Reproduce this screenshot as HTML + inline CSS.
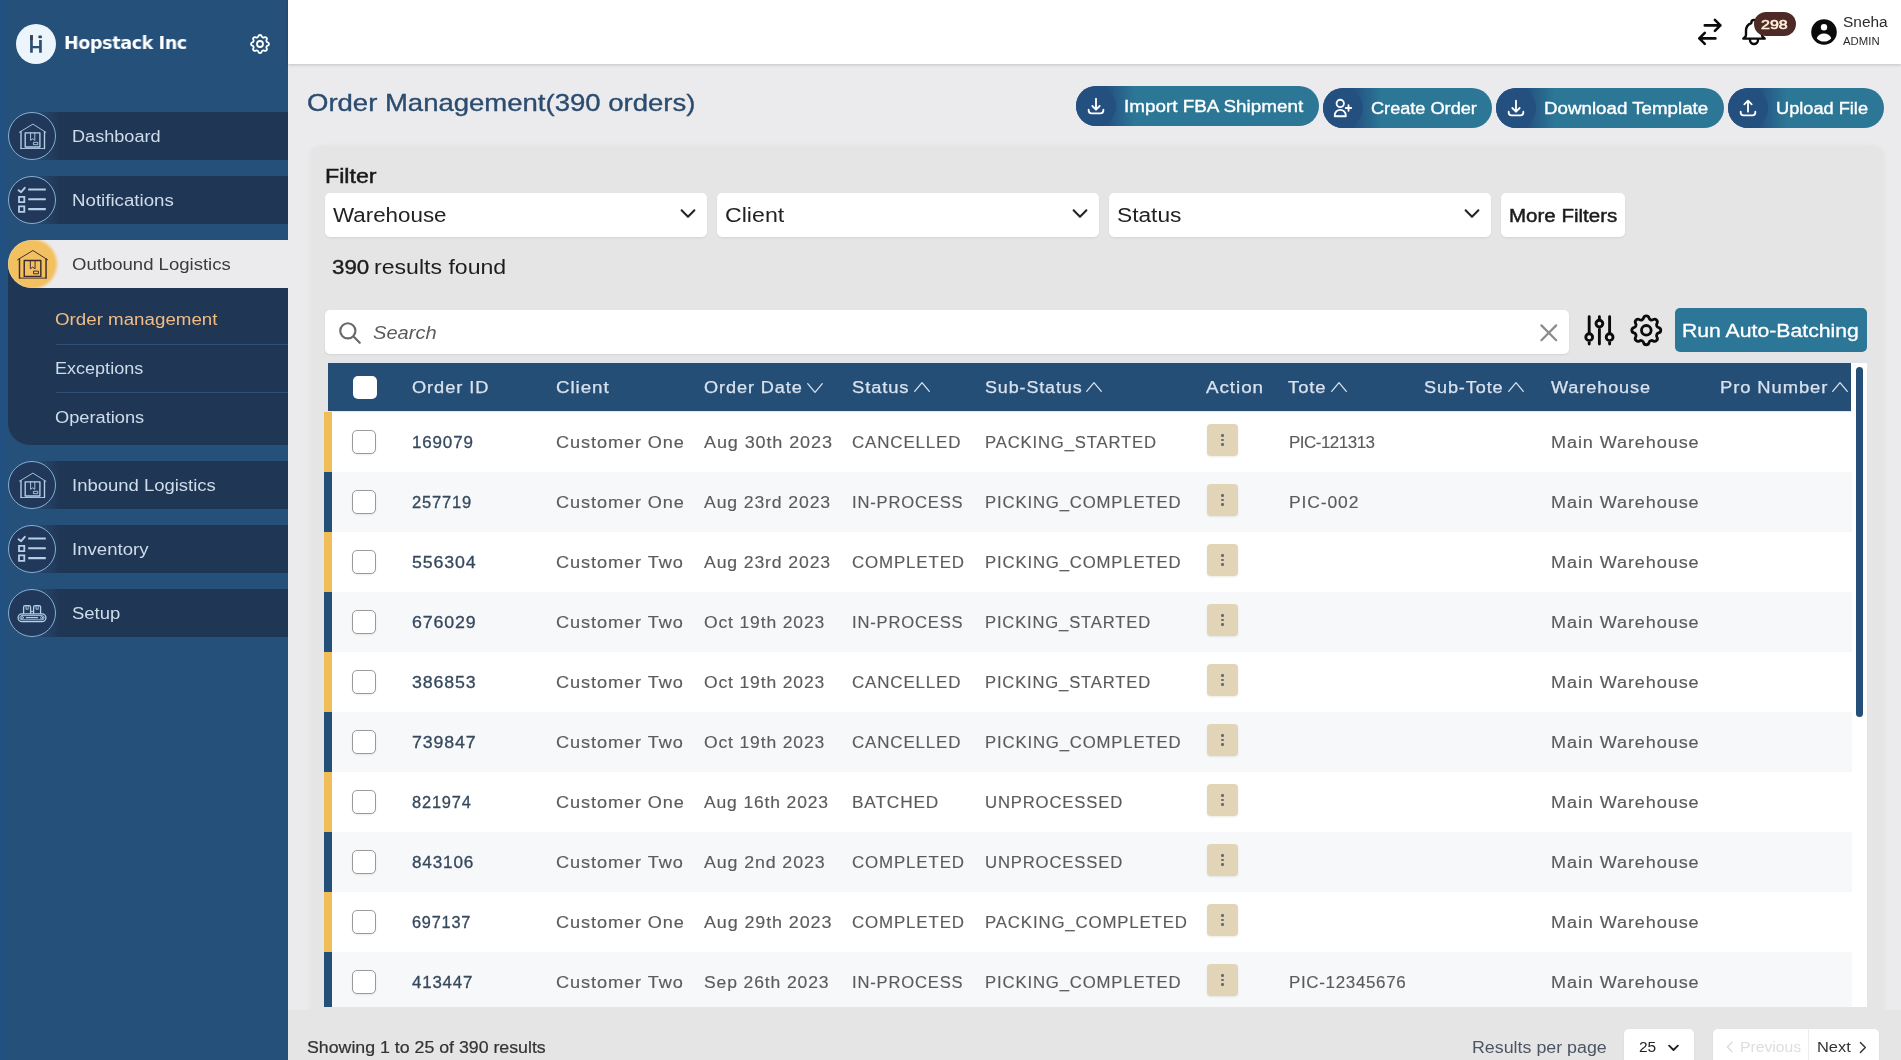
<!DOCTYPE html>
<html lang="en"><head><meta charset="utf-8"><title>Order Management</title>
<style>
html,body{margin:0;padding:0}
body{width:1901px;height:1060px;overflow:hidden;position:relative;background:#ebebed;font-family:"Liberation Sans",sans-serif}
.a{position:absolute}
.t{position:absolute;white-space:pre;transform-origin:0 50%;will-change:transform}
#side{background:linear-gradient(90deg,#205083 0,#25507a 9px,#25507a 100%)}
#top{background:#fff;box-shadow:0 1px 3px rgba(0,0,0,.18)}
.pill{border-radius:20px;background:linear-gradient(90deg,#245080 0,#245080 30px,#2c7696 58px,#2c7696 100%)}
#panel{background:#e5e5e6;border-radius:10px;box-shadow:0 0 3px 2px #e5e5e6}
.box{background:#fff;border-radius:5px;box-shadow:0 1px 2px rgba(0,0,0,.08)}
.cb{width:24px;height:24px;box-sizing:border-box;border:1px solid #9a9a9a;border-radius:5px;background:#fff;box-shadow:0 1px 2px rgba(0,0,0,.08)}
.act{width:31.5px;height:32.3px;border-radius:4px;background:#e1d4b7;box-shadow:0 1px 2px rgba(120,90,30,.12)}
.dot{width:2.6px;height:2.6px;border-radius:50%;background:#636a78}
</style></head>
<body>
<div class="a" id="side" style="left:0;top:0;width:288px;height:1060px"></div>
<div class="a" style="left:16px;top:24px;width:40px;height:40px;border-radius:50%;background:#ecf5fc"></div>
<svg class="a" style="left:28px;top:34px" width="16" height="20" viewBox="0 0 16 20"><path d="M3.45 1.2V18.8M12.45 5.9V18.8" stroke="#2b4d76" stroke-width="2.7" fill="none"/><path d="M3.45 13.15H12.45" stroke="#2b4d76" stroke-width="2.3" fill="none"/><path d="M3.45 1.2V6" stroke="#3b4048" stroke-width="2.7" fill="none"/><rect x="10.4" y="1.6" width="3.5" height="2.7" rx="0.8" fill="#33455e"/></svg>
<span class="t" style="left:64.0px;top:32.1px;font-size:18px;line-height:22px;color:#fff;font-weight:700;font-family:'DejaVu Sans', 'Liberation Sans', sans-serif;letter-spacing:-0.35px;transform:scaleX(0.97);">Hopstack Inc</span>
<svg class="a" style="left:248px;top:32px" width="24" height="24" viewBox="0 0 24 24" fill="none" stroke="#fff" stroke-width="1.8" stroke-linecap="round" stroke-linejoin="round" ><path d="M10.325 4.317c.426-1.756 2.924-1.756 3.35 0a1.724 1.724 0 002.573 1.066c1.543-.94 3.31.826 2.37 2.37a1.724 1.724 0 001.065 2.572c1.756.426 1.756 2.924 0 3.35a1.724 1.724 0 00-1.066 2.573c.94 1.543-.826 3.31-2.37 2.37a1.724 1.724 0 00-2.572 1.065c-.426 1.756-2.924 1.756-3.35 0a1.724 1.724 0 00-2.573-1.066c-1.543.94-3.31-.826-2.37-2.37a1.724 1.724 0 00-1.065-2.572c-1.756-.426-1.756-2.924 0-3.35a1.724 1.724 0 001.066-2.573c-.94-1.543.826-3.31 2.37-2.37.996.608 2.296.07 2.572-1.065z"/><path d="M15 12a3 3 0 11-6 0 3 3 0 016 0z"/></svg>
<div class="a" style="left:30px;top:112px;width:258px;height:48px;background:linear-gradient(90deg,rgba(32,54,85,0) 0,#203655 30px)"></div>
<div class="a" style="left:8px;top:112px;width:48px;height:48px;border-radius:50%;background:#21385b;box-sizing:border-box;border:1.2px solid #86b0cf"></div>
<svg class="a" style="left:8px;top:112px" width="48" height="48" viewBox="0 0 48 48" fill="none" stroke="#b5d0e6" stroke-linecap="round" stroke-linejoin="round"><path d="M11.3 20.3L24.9 12.1L37.9 20.3" stroke-width="0.9"/><path d="M13 19.6V36.5M36.5 19.6V36.5" stroke-width="1.35"/><path d="M13 36.5H36.5" stroke-width="0.9"/><path d="M17.2 20.9H31.9V35H17.2Z" stroke-width="1.35"/><path d="M22.6 20.9V28.3L24.7 26.8L26.8 28.3V20.9" stroke-width="0.9"/><path d="M25.8 30.3h4v2.4h-4z" stroke-width="0.9"/></svg>
<span class="t" style="left:71.6px;top:126.8px;font-size:16px;line-height:20px;color:#cfdcea;transform:scaleX(1.132);">Dashboard</span>
<div class="a" style="left:30px;top:176px;width:258px;height:48px;background:linear-gradient(90deg,rgba(32,54,85,0) 0,#203655 30px)"></div>
<div class="a" style="left:8px;top:176px;width:48px;height:48px;border-radius:50%;background:#21385b;box-sizing:border-box;border:1.2px solid #86b0cf"></div>
<svg class="a" style="left:8px;top:176px" width="48" height="48" viewBox="0 0 48 48" fill="none" stroke="#b5d0e6" stroke-linecap="round" stroke-linejoin="round"><path d="M10.6 14.2l2.5 2 3.7-4.4" stroke-width="1.9"/><path d="M20.2 13.5H37.8M20.2 23.3H37.8M20.2 33.1H37.8" stroke-width="2.1" stroke-linecap="butt"/><path d="M11 20.9h5.3v5.3H11zM11 30.3h5.3v5.6H11z" stroke-width="1.8" stroke-linejoin="miter"/></svg>
<span class="t" style="left:71.6px;top:190.8px;font-size:16px;line-height:20px;color:#cfdcea;transform:scaleX(1.168);">Notifications</span>
<div class="a" style="left:8px;top:264px;width:280px;height:181px;border-radius:0 0 0 22px;background:#203655"></div>
<div class="a" style="left:8px;top:240px;width:280px;height:48px;border-radius:24px 0 0 24px;background:#ebebed;overflow:hidden"><div class="a" style="left:-3px;top:-3px;width:54px;height:54px;background:radial-gradient(circle closest-side at 50% 50%,#f3c05f 0,#f3c05f 84%,rgba(243,192,95,0) 100%)"></div></div>
<svg class="a" style="left:8px;top:240px" width="48" height="48" viewBox="0 0 48 48" fill="none" stroke="#3a2b30" stroke-linecap="round" stroke-linejoin="round"><g transform="translate(24.7 24.3) scale(1.13) translate(-24.7 -24.3)"><path d="M11.3 20.3L24.9 12.1L37.9 20.3" stroke-width="0.85"/><path d="M13 19.6V36.5M36.5 19.6V36.5" stroke-width="1.275"/><path d="M13 36.5H36.5" stroke-width="0.85"/><path d="M17.2 20.9H31.9V35H17.2Z" stroke-width="1.275"/><path d="M22.6 20.9V28.3L24.7 26.8L26.8 28.3V20.9" stroke-width="0.85"/><path d="M25.8 30.3h4v2.4h-4z" stroke-width="0.85"/></g></svg>
<span class="t" style="left:71.6px;top:254.8px;font-size:16px;line-height:20px;color:#3b3b3b;transform:scaleX(1.159);">Outbound Logistics</span>
<span class="t" style="left:55.3px;top:309.9px;font-size:16px;line-height:20px;color:#f0bc84;transform:scaleX(1.171);">Order management</span>
<div class="a" style="left:56px;top:344px;width:232px;height:1px;background:#2f4f77"></div>
<span class="t" style="left:55.3px;top:359.0px;font-size:16px;line-height:20px;color:#cfdcea;transform:scaleX(1.127);">Exceptions</span>
<div class="a" style="left:56px;top:392px;width:232px;height:1px;background:#2f4f77"></div>
<span class="t" style="left:55.3px;top:407.8px;font-size:16px;line-height:20px;color:#cfdcea;transform:scaleX(1.14);">Operations</span>
<div class="a" style="left:30px;top:461px;width:258px;height:48px;background:linear-gradient(90deg,rgba(32,54,85,0) 0,#203655 30px)"></div>
<div class="a" style="left:8px;top:461px;width:48px;height:48px;border-radius:50%;background:#21385b;box-sizing:border-box;border:1.2px solid #86b0cf"></div>
<svg class="a" style="left:8px;top:461px" width="48" height="48" viewBox="0 0 48 48" fill="none" stroke="#b5d0e6" stroke-linecap="round" stroke-linejoin="round"><path d="M11.3 20.3L24.9 12.1L37.9 20.3" stroke-width="0.9"/><path d="M13 19.6V36.5M36.5 19.6V36.5" stroke-width="1.35"/><path d="M13 36.5H36.5" stroke-width="0.9"/><path d="M17.2 20.9H31.9V35H17.2Z" stroke-width="1.35"/><path d="M22.6 20.9V28.3L24.7 26.8L26.8 28.3V20.9" stroke-width="0.9"/><path d="M25.8 30.3h4v2.4h-4z" stroke-width="0.9"/></svg>
<span class="t" style="left:71.6px;top:475.8px;font-size:16px;line-height:20px;color:#cfdcea;transform:scaleX(1.155);">Inbound Logistics</span>
<div class="a" style="left:30px;top:525px;width:258px;height:48px;background:linear-gradient(90deg,rgba(32,54,85,0) 0,#203655 30px)"></div>
<div class="a" style="left:8px;top:525px;width:48px;height:48px;border-radius:50%;background:#21385b;box-sizing:border-box;border:1.2px solid #86b0cf"></div>
<svg class="a" style="left:8px;top:525px" width="48" height="48" viewBox="0 0 48 48" fill="none" stroke="#b5d0e6" stroke-linecap="round" stroke-linejoin="round"><path d="M10.6 14.2l2.5 2 3.7-4.4" stroke-width="1.9"/><path d="M20.2 13.5H37.8M20.2 23.3H37.8M20.2 33.1H37.8" stroke-width="2.1" stroke-linecap="butt"/><path d="M11 20.9h5.3v5.3H11zM11 30.3h5.3v5.6H11z" stroke-width="1.8" stroke-linejoin="miter"/></svg>
<span class="t" style="left:71.6px;top:539.8px;font-size:16px;line-height:20px;color:#cfdcea;transform:scaleX(1.162);">Inventory</span>
<div class="a" style="left:30px;top:589px;width:258px;height:48px;background:linear-gradient(90deg,rgba(32,54,85,0) 0,#203655 30px)"></div>
<div class="a" style="left:8px;top:589px;width:48px;height:48px;border-radius:50%;background:#21385b;box-sizing:border-box;border:1.2px solid #86b0cf"></div>
<svg class="a" style="left:8px;top:589px" width="48" height="48" viewBox="0 0 48 48" fill="none" stroke="#b5d0e6" stroke-linecap="round" stroke-linejoin="round"><path d="M14 24.8h20a3.9 3.9 0 010 7.8H14a3.9 3.9 0 010-7.8z" stroke-width="1.3"/><path d="M14 26.6h20a2.1 2.1 0 010 4.2H14a2.1 2.1 0 010-4.2z" stroke-width="0.9"/><circle cx="14.3" cy="28.7" r="1.1" stroke-width="0.9"/><circle cx="33.7" cy="28.7" r="1.1" stroke-width="0.9"/><path d="M18.4 28.7H29.6" stroke-width="1.2"/><path d="M15.6 24.6V18.2a1.6 1.6 0 011.6-1.6h3.8a1.6 1.6 0 011.6 1.6V24.6" stroke-width="1.3"/><path d="M25.6 24.6V18.2a1.6 1.6 0 011.6-1.6h3.8a1.6 1.6 0 011.6 1.6V24.6" stroke-width="1.3"/><path d="M18 16.8v3.4h2.2v-3.4M28 16.8v3.4h2.2v-3.4" stroke-width="0.9"/><path d="M22.6 22.4h3" stroke-width="1"/></svg>
<span class="t" style="left:71.6px;top:603.8px;font-size:16px;line-height:20px;color:#cfdcea;transform:scaleX(1.153);">Setup</span>
<div class="a" id="top" style="left:288px;top:0;width:1613px;height:64px"></div>
<svg class="a" style="left:1690px;top:8px" width="40" height="48" viewBox="0 0 40 48" fill="none" stroke="#0b0b0b" stroke-width="2.6" stroke-linecap="round" stroke-linejoin="round"><path d="M14.8 17.4H30.4M24.9 11.9l5.5 5.5-5.5 5.5M25.4 30.4H9.3M14.8 24.9l-5.5 5.5 5.5 5.5"/></svg>
<svg class="a" style="left:1737.8px;top:16px" width="32" height="32" viewBox="0 0 24 24" fill="none" stroke="#0b0b0b" stroke-width="1.8" stroke-linecap="round" stroke-linejoin="round" ><path d="M15 17h5l-1.405-1.405A2.032 2.032 0 0118 14.158V11a6.002 6.002 0 00-4-5.659V5a2 2 0 10-4 0v.341C7.67 6.165 6 8.388 6 11v3.159c0 .538-.214 1.055-.595 1.436L4 17h5m6 0v1a3 3 0 11-6 0v-1m6 0H9"/></svg>
<div class="a" style="left:1754px;top:12px;width:42px;height:24px;border-radius:12px;background:#4e2a26"></div>
<span class="t" style="left:1761.0px;top:16.3px;font-size:13.5px;line-height:17px;color:#fff0d8;-webkit-text-stroke:0.6px #fff0d8;transform:scaleX(1.185);">298</span>
<svg class="a" style="left:1808px;top:16px" width="32" height="32" viewBox="0 0 20 20" fill="#0b0b0b" stroke="none" stroke-width="2" stroke-linecap="round" stroke-linejoin="round" ><path d="M18 10a8 8 0 11-16 0 8 8 0 0116 0zm-6-3a2 2 0 11-4 0 2 2 0 014 0zm-2 4a5 5 0 00-4.546 2.916A5.986 5.986 0 0010 16a5.986 5.986 0 004.546-2.084A5 5 0 0010 11z" fill-rule="evenodd" clip-rule="evenodd"/></svg>
<span class="t" style="left:1843.0px;top:13.3px;font-size:14px;line-height:18px;color:#2b2b2b;transform:scaleX(1.104);">Sneha</span>
<span class="t" style="left:1843.0px;top:36.0px;font-size:10px;line-height:12px;color:#2b2b2b;transform:scaleX(1.135);">ADMIN</span>
<span class="t" style="left:307.0px;top:88.1px;font-size:24px;line-height:30px;color:#2b4c6f;-webkit-text-stroke:0.35px #2b4c6f;transform:scaleX(1.146);">Order Management(390 orders)</span>
<div class="a pill" style="left:1076px;top:86px;width:243px;height:40px"></div>
<div class="a" style="left:1076px;top:86px;width:40px;height:40px;border-radius:50%;background:#245080"></div>
<svg class="a" style="left:1085px;top:95px" width="22" height="22" viewBox="0 0 24 24" fill="none" stroke="#fff" stroke-width="2" stroke-linecap="round" stroke-linejoin="round" ><path d="M4 16v1a3 3 0 003 3h10a3 3 0 003-3v-1m-4-4l-4 4m0 0l-4-4m4 4V4"/></svg>
<span class="t" style="left:1124.0px;top:96.6px;font-size:16px;line-height:20px;color:#fff;-webkit-text-stroke:0.35px #fff;transform:scaleX(1.178);">Import FBA Shipment</span>
<div class="a pill" style="left:1323px;top:88px;width:169px;height:40px"></div>
<div class="a" style="left:1323px;top:88px;width:40px;height:40px;border-radius:50%;background:#245080"></div>
<svg class="a" style="left:1332px;top:97px" width="22" height="22" viewBox="0 0 24 24" fill="none" stroke="#fff" stroke-width="2" stroke-linecap="round" stroke-linejoin="round" ><path d="M18 9v3m0 0v3m0-3h3m-3 0h-3m-2-5a4 4 0 11-8 0 4 4 0 018 0zM3 20a6 6 0 0112 0v1H3v-1z"/></svg>
<span class="t" style="left:1371.0px;top:98.6px;font-size:16px;line-height:20px;color:#fff;-webkit-text-stroke:0.35px #fff;transform:scaleX(1.134);">Create Order</span>
<div class="a pill" style="left:1496px;top:88px;width:228px;height:40px"></div>
<div class="a" style="left:1496px;top:88px;width:40px;height:40px;border-radius:50%;background:#245080"></div>
<svg class="a" style="left:1505px;top:97px" width="22" height="22" viewBox="0 0 24 24" fill="none" stroke="#fff" stroke-width="2" stroke-linecap="round" stroke-linejoin="round" ><path d="M4 16v1a3 3 0 003 3h10a3 3 0 003-3v-1m-4-4l-4 4m0 0l-4-4m4 4V4"/></svg>
<span class="t" style="left:1544.0px;top:98.6px;font-size:16px;line-height:20px;color:#fff;-webkit-text-stroke:0.35px #fff;transform:scaleX(1.171);">Download Template</span>
<div class="a pill" style="left:1728px;top:88px;width:156px;height:40px"></div>
<div class="a" style="left:1728px;top:88px;width:40px;height:40px;border-radius:50%;background:#245080"></div>
<svg class="a" style="left:1737px;top:97px" width="22" height="22" viewBox="0 0 24 24" fill="none" stroke="#fff" stroke-width="2" stroke-linecap="round" stroke-linejoin="round" ><path d="M4 16v1a3 3 0 003 3h10a3 3 0 003-3v-1m-4-8l-4-4m0 0L8 8m4-4v12"/></svg>
<span class="t" style="left:1775.8px;top:98.6px;font-size:16px;line-height:20px;color:#fff;-webkit-text-stroke:0.35px #fff;transform:scaleX(1.137);">Upload File</span>
<div class="a" id="panel" style="left:311px;top:147px;width:1572px;height:930px"></div>
<div class="a" style="left:288px;top:1010px;width:1613px;height:50px;background:#e5e5e6"></div>
<span class="t" style="left:324.8px;top:164.4px;font-size:20px;line-height:25px;color:#1a1a1a;-webkit-text-stroke:0.45px #1a1a1a;transform:scaleX(1.161);">Filter</span>
<div class="a box" style="left:325px;top:193px;width:382px;height:44px"></div>
<span class="t" style="left:333.0px;top:203.2px;font-size:20px;line-height:25px;color:#222;transform:scaleX(1.118);">Warehouse</span>
<svg class="a" style="left:677px;top:202.2px" width="22" height="22" viewBox="0 0 24 24" fill="none" stroke="#222" stroke-width="2.2" stroke-linecap="round" stroke-linejoin="round" ><path d="M19 9l-7 7-7-7"/></svg>
<div class="a box" style="left:717px;top:193px;width:382px;height:44px"></div>
<span class="t" style="left:725.0px;top:203.2px;font-size:20px;line-height:25px;color:#222;transform:scaleX(1.158);">Client</span>
<svg class="a" style="left:1069px;top:202.2px" width="22" height="22" viewBox="0 0 24 24" fill="none" stroke="#222" stroke-width="2.2" stroke-linecap="round" stroke-linejoin="round" ><path d="M19 9l-7 7-7-7"/></svg>
<div class="a box" style="left:1109px;top:193px;width:382px;height:44px"></div>
<span class="t" style="left:1117.0px;top:203.2px;font-size:20px;line-height:25px;color:#222;transform:scaleX(1.136);">Status</span>
<svg class="a" style="left:1461px;top:202.2px" width="22" height="22" viewBox="0 0 24 24" fill="none" stroke="#222" stroke-width="2.2" stroke-linecap="round" stroke-linejoin="round" ><path d="M19 9l-7 7-7-7"/></svg>
<div class="a box" style="left:1501px;top:193px;width:124px;height:44px"></div>
<span class="t" style="left:1509.2px;top:204.5px;font-size:18px;line-height:22px;color:#1c1c1c;-webkit-text-stroke:0.45px #1c1c1c;transform:scaleX(1.139);">More Filters</span>
<span class="t" style="left:331.7px;top:255.4px;font-size:20px;line-height:25px;color:#1d1d1d;-webkit-text-stroke:0.4px #1d1d1d;transform:scaleX(1.115);">390</span>
<span class="t" style="left:373.5px;top:255.4px;font-size:20px;line-height:25px;color:#1d1d1d;transform:scaleX(1.154);">results found</span>
<div class="a box" style="left:325px;top:310px;width:1244px;height:44px"></div>
<svg class="a" style="left:337px;top:319.5px" width="26" height="26" viewBox="0 0 24 24" fill="none" stroke="#6a6a6a" stroke-width="2" stroke-linecap="round" stroke-linejoin="round" ><path d="M21 21l-6-6m2-5a7 7 0 11-14 0 7 7 0 0114 0z"/></svg>
<span class="t" style="left:372.6px;top:321.8px;font-size:18px;line-height:22px;color:#5c5c5c;font-style:italic;transform:scaleX(1.115);">Search</span>
<svg class="a" style="left:1533.9px;top:317.8px" width="29.6" height="29.6" viewBox="0 0 24 24" fill="none" stroke="#8b8b8b" stroke-width="1.8" stroke-linecap="round" stroke-linejoin="round" ><path d="M6 18L18 6M6 6l12 12"/></svg>
<svg class="a" style="left:1578.6px;top:310.2px" width="40.8" height="40.8" viewBox="0 0 24 24" fill="none" stroke="#0b0b0b" stroke-width="1.7" stroke-linecap="round" stroke-linejoin="round" ><path d="M12 6V4m0 2a2 2 0 100 4m0-4a2 2 0 110 4m-6 8a2 2 0 100-4m0 4a2 2 0 110-4m0 4v2m0-6V4m6 6v10m6-2a2 2 0 100-4m0 4a2 2 0 110-4m0 4v2m0-6V4"/></svg>
<svg class="a" style="left:1627.3px;top:311.2px" width="38.6" height="38.6" viewBox="0 0 24 24" fill="none" stroke="#0b0b0b" stroke-width="1.75" stroke-linecap="round" stroke-linejoin="round" ><path d="M10.325 4.317c.426-1.756 2.924-1.756 3.35 0a1.724 1.724 0 002.573 1.066c1.543-.94 3.31.826 2.37 2.37a1.724 1.724 0 001.065 2.572c1.756.426 1.756 2.924 0 3.35a1.724 1.724 0 00-1.066 2.573c.94 1.543-.826 3.31-2.37 2.37a1.724 1.724 0 00-2.572 1.065c-.426 1.756-2.924 1.756-3.35 0a1.724 1.724 0 00-2.573-1.066c-1.543.94-3.31-.826-2.37-2.37a1.724 1.724 0 00-1.065-2.572c-1.756-.426-1.756-2.924 0-3.35a1.724 1.724 0 001.066-2.573c-.94-1.543.826-3.31 2.37-2.37.996.608 2.296.07 2.572-1.065z"/><path d="M15 12a3 3 0 11-6 0 3 3 0 016 0z"/></svg>
<div class="a" style="left:1675px;top:308px;width:192px;height:44px;border-radius:5px;background:#2c7797"></div>
<span class="t" style="left:1682.0px;top:320.0px;font-size:18px;line-height:22px;color:#fff;-webkit-text-stroke:0.3px #fff;transform:scaleX(1.178);">Run Auto-Batching</span>
<div class="a" style="left:328.2px;top:359.8px;width:1538.8px;height:3.4px;background:linear-gradient(180deg,#e1e5ea,#dce5ee)"></div>
<div class="a" style="left:324px;top:363px;width:1543px;height:643.5px;overflow:hidden" id="tbl">
<div class="a" style="left:1527px;top:0;width:16px;height:644px;background:#fff"></div>
<div class="a" style="left:8px;top:48.6px;width:1520px;height:60px;background:#ffffff"></div>
<div class="a" style="left:0.4px;top:48.6px;width:7.8px;height:60px;background:#f1bd58"></div>
<div class="a cb" style="left:28.3px;top:67.1px"></div>
<span class="t" style="left:87.7px;top:69.8px;font-size:16px;line-height:20px;color:#36485d;-webkit-text-stroke:0.3px #36485d;letter-spacing:0.8px;transform:scaleX(1.061);">169079</span>
<span class="t" style="left:231.8px;top:69.8px;font-size:16px;line-height:20px;color:#5b5b5b;-webkit-text-stroke:0.15px #5b5b5b;letter-spacing:0.8px;transform:scaleX(1.133);">Customer One</span>
<span class="t" style="left:380.0px;top:69.8px;font-size:16px;line-height:20px;color:#5b5b5b;-webkit-text-stroke:0.15px #5b5b5b;letter-spacing:0.8px;transform:scaleX(1.125);">Aug 30th 2023</span>
<span class="t" style="left:528.2px;top:69.8px;font-size:16px;line-height:20px;color:#5b5b5b;-webkit-text-stroke:0.15px #5b5b5b;letter-spacing:0.8px;transform:scaleX(1.059);">CANCELLED</span>
<span class="t" style="left:660.5px;top:69.8px;font-size:16px;line-height:20px;color:#5b5b5b;-webkit-text-stroke:0.15px #5b5b5b;letter-spacing:0.8px;transform:scaleX(1.042);">PACKING_STARTED</span>
<div class="a act" style="left:882.8px;top:61.2px"></div>
<div class="a dot" style="left:897.3px;top:71.1px"></div><div class="a dot" style="left:897.3px;top:75.6px"></div><div class="a dot" style="left:897.3px;top:80.3px"></div>
<span class="t" style="left:964.6px;top:69.8px;font-size:16px;line-height:20px;color:#5b5b5b;-webkit-text-stroke:0.15px #5b5b5b;letter-spacing:-0.47px;transform:scaleX(1.06);">PIC-121313</span>
<span class="t" style="left:1227.3px;top:69.8px;font-size:16px;line-height:20px;color:#5b5b5b;-webkit-text-stroke:0.15px #5b5b5b;letter-spacing:0.8px;transform:scaleX(1.129);">Main Warehouse</span>
<div class="a" style="left:8px;top:108.6px;width:1520px;height:60px;background:#f7f8fa"></div>
<div class="a" style="left:0.4px;top:108.6px;width:7.8px;height:60px;background:#244f78"></div>
<div class="a cb" style="left:28.3px;top:127.1px"></div>
<span class="t" style="left:87.7px;top:129.8px;font-size:16px;line-height:20px;color:#36485d;-webkit-text-stroke:0.3px #36485d;letter-spacing:0.8px;transform:scaleX(1.032);">257719</span>
<span class="t" style="left:231.8px;top:129.8px;font-size:16px;line-height:20px;color:#5b5b5b;-webkit-text-stroke:0.15px #5b5b5b;letter-spacing:0.8px;transform:scaleX(1.133);">Customer One</span>
<span class="t" style="left:380.0px;top:129.8px;font-size:16px;line-height:20px;color:#5b5b5b;-webkit-text-stroke:0.15px #5b5b5b;letter-spacing:0.8px;transform:scaleX(1.101);">Aug 23rd 2023</span>
<span class="t" style="left:528.2px;top:129.8px;font-size:16px;line-height:20px;color:#5b5b5b;-webkit-text-stroke:0.15px #5b5b5b;letter-spacing:0.8px;transform:scaleX(1.036);">IN-PROCESS</span>
<span class="t" style="left:660.5px;top:129.8px;font-size:16px;line-height:20px;color:#5b5b5b;-webkit-text-stroke:0.15px #5b5b5b;letter-spacing:0.8px;transform:scaleX(1.046);">PICKING_COMPLETED</span>
<div class="a act" style="left:882.8px;top:121.19999999999999px"></div>
<div class="a dot" style="left:897.3px;top:131.1px"></div><div class="a dot" style="left:897.3px;top:135.6px"></div><div class="a dot" style="left:897.3px;top:140.29999999999998px"></div>
<span class="t" style="left:964.6px;top:129.8px;font-size:16px;line-height:20px;color:#5b5b5b;-webkit-text-stroke:0.15px #5b5b5b;letter-spacing:0.8px;transform:scaleX(1.093);">PIC-002</span>
<span class="t" style="left:1227.3px;top:129.8px;font-size:16px;line-height:20px;color:#5b5b5b;-webkit-text-stroke:0.15px #5b5b5b;letter-spacing:0.8px;transform:scaleX(1.129);">Main Warehouse</span>
<div class="a" style="left:8px;top:168.6px;width:1520px;height:60px;background:#ffffff"></div>
<div class="a" style="left:0.4px;top:168.6px;width:7.8px;height:60px;background:#f1bd58"></div>
<div class="a cb" style="left:28.3px;top:187.1px"></div>
<span class="t" style="left:87.7px;top:189.8px;font-size:16px;line-height:20px;color:#36485d;-webkit-text-stroke:0.3px #36485d;letter-spacing:0.8px;transform:scaleX(1.11);">556304</span>
<span class="t" style="left:231.8px;top:189.8px;font-size:16px;line-height:20px;color:#5b5b5b;-webkit-text-stroke:0.15px #5b5b5b;letter-spacing:0.8px;transform:scaleX(1.136);">Customer Two</span>
<span class="t" style="left:380.0px;top:189.8px;font-size:16px;line-height:20px;color:#5b5b5b;-webkit-text-stroke:0.15px #5b5b5b;letter-spacing:0.8px;transform:scaleX(1.101);">Aug 23rd 2023</span>
<span class="t" style="left:528.2px;top:189.8px;font-size:16px;line-height:20px;color:#5b5b5b;-webkit-text-stroke:0.15px #5b5b5b;letter-spacing:0.8px;transform:scaleX(1.057);">COMPLETED</span>
<span class="t" style="left:660.5px;top:189.8px;font-size:16px;line-height:20px;color:#5b5b5b;-webkit-text-stroke:0.15px #5b5b5b;letter-spacing:0.8px;transform:scaleX(1.046);">PICKING_COMPLETED</span>
<div class="a act" style="left:882.8px;top:181.2px"></div>
<div class="a dot" style="left:897.3px;top:191.1px"></div><div class="a dot" style="left:897.3px;top:195.6px"></div><div class="a dot" style="left:897.3px;top:200.29999999999998px"></div>
<span class="t" style="left:1227.3px;top:189.8px;font-size:16px;line-height:20px;color:#5b5b5b;-webkit-text-stroke:0.15px #5b5b5b;letter-spacing:0.8px;transform:scaleX(1.129);">Main Warehouse</span>
<div class="a" style="left:8px;top:228.6px;width:1520px;height:60px;background:#f7f8fa"></div>
<div class="a" style="left:0.4px;top:228.6px;width:7.8px;height:60px;background:#244f78"></div>
<div class="a cb" style="left:28.3px;top:247.1px"></div>
<span class="t" style="left:87.7px;top:249.8px;font-size:16px;line-height:20px;color:#36485d;-webkit-text-stroke:0.3px #36485d;letter-spacing:0.8px;transform:scaleX(1.11);">676029</span>
<span class="t" style="left:231.8px;top:249.8px;font-size:16px;line-height:20px;color:#5b5b5b;-webkit-text-stroke:0.15px #5b5b5b;letter-spacing:0.8px;transform:scaleX(1.136);">Customer Two</span>
<span class="t" style="left:380.0px;top:249.8px;font-size:16px;line-height:20px;color:#5b5b5b;-webkit-text-stroke:0.15px #5b5b5b;letter-spacing:0.8px;transform:scaleX(1.092);">Oct 19th 2023</span>
<span class="t" style="left:528.2px;top:249.8px;font-size:16px;line-height:20px;color:#5b5b5b;-webkit-text-stroke:0.15px #5b5b5b;letter-spacing:0.8px;transform:scaleX(1.036);">IN-PROCESS</span>
<span class="t" style="left:660.5px;top:249.8px;font-size:16px;line-height:20px;color:#5b5b5b;-webkit-text-stroke:0.15px #5b5b5b;letter-spacing:0.8px;transform:scaleX(1.038);">PICKING_STARTED</span>
<div class="a act" style="left:882.8px;top:241.2px"></div>
<div class="a dot" style="left:897.3px;top:251.1px"></div><div class="a dot" style="left:897.3px;top:255.6px"></div><div class="a dot" style="left:897.3px;top:260.3px"></div>
<span class="t" style="left:1227.3px;top:249.8px;font-size:16px;line-height:20px;color:#5b5b5b;-webkit-text-stroke:0.15px #5b5b5b;letter-spacing:0.8px;transform:scaleX(1.129);">Main Warehouse</span>
<div class="a" style="left:8px;top:288.6px;width:1520px;height:60px;background:#ffffff"></div>
<div class="a" style="left:0.4px;top:288.6px;width:7.8px;height:60px;background:#f1bd58"></div>
<div class="a cb" style="left:28.3px;top:307.1px"></div>
<span class="t" style="left:87.7px;top:309.8px;font-size:16px;line-height:20px;color:#36485d;-webkit-text-stroke:0.3px #36485d;letter-spacing:0.8px;transform:scaleX(1.11);">386853</span>
<span class="t" style="left:231.8px;top:309.8px;font-size:16px;line-height:20px;color:#5b5b5b;-webkit-text-stroke:0.15px #5b5b5b;letter-spacing:0.8px;transform:scaleX(1.136);">Customer Two</span>
<span class="t" style="left:380.0px;top:309.8px;font-size:16px;line-height:20px;color:#5b5b5b;-webkit-text-stroke:0.15px #5b5b5b;letter-spacing:0.8px;transform:scaleX(1.092);">Oct 19th 2023</span>
<span class="t" style="left:528.2px;top:309.8px;font-size:16px;line-height:20px;color:#5b5b5b;-webkit-text-stroke:0.15px #5b5b5b;letter-spacing:0.8px;transform:scaleX(1.059);">CANCELLED</span>
<span class="t" style="left:660.5px;top:309.8px;font-size:16px;line-height:20px;color:#5b5b5b;-webkit-text-stroke:0.15px #5b5b5b;letter-spacing:0.8px;transform:scaleX(1.038);">PICKING_STARTED</span>
<div class="a act" style="left:882.8px;top:301.20000000000005px"></div>
<div class="a dot" style="left:897.3px;top:311.1px"></div><div class="a dot" style="left:897.3px;top:315.6px"></div><div class="a dot" style="left:897.3px;top:320.3px"></div>
<span class="t" style="left:1227.3px;top:309.8px;font-size:16px;line-height:20px;color:#5b5b5b;-webkit-text-stroke:0.15px #5b5b5b;letter-spacing:0.8px;transform:scaleX(1.129);">Main Warehouse</span>
<div class="a" style="left:8px;top:348.6px;width:1520px;height:60px;background:#f7f8fa"></div>
<div class="a" style="left:0.4px;top:348.6px;width:7.8px;height:60px;background:#244f78"></div>
<div class="a cb" style="left:28.3px;top:367.1px"></div>
<span class="t" style="left:87.7px;top:369.8px;font-size:16px;line-height:20px;color:#36485d;-webkit-text-stroke:0.3px #36485d;letter-spacing:0.8px;transform:scaleX(1.11);">739847</span>
<span class="t" style="left:231.8px;top:369.8px;font-size:16px;line-height:20px;color:#5b5b5b;-webkit-text-stroke:0.15px #5b5b5b;letter-spacing:0.8px;transform:scaleX(1.136);">Customer Two</span>
<span class="t" style="left:380.0px;top:369.8px;font-size:16px;line-height:20px;color:#5b5b5b;-webkit-text-stroke:0.15px #5b5b5b;letter-spacing:0.8px;transform:scaleX(1.092);">Oct 19th 2023</span>
<span class="t" style="left:528.2px;top:369.8px;font-size:16px;line-height:20px;color:#5b5b5b;-webkit-text-stroke:0.15px #5b5b5b;letter-spacing:0.8px;transform:scaleX(1.059);">CANCELLED</span>
<span class="t" style="left:660.5px;top:369.8px;font-size:16px;line-height:20px;color:#5b5b5b;-webkit-text-stroke:0.15px #5b5b5b;letter-spacing:0.8px;transform:scaleX(1.046);">PICKING_COMPLETED</span>
<div class="a act" style="left:882.8px;top:361.20000000000005px"></div>
<div class="a dot" style="left:897.3px;top:371.1px"></div><div class="a dot" style="left:897.3px;top:375.6px"></div><div class="a dot" style="left:897.3px;top:380.3px"></div>
<span class="t" style="left:1227.3px;top:369.8px;font-size:16px;line-height:20px;color:#5b5b5b;-webkit-text-stroke:0.15px #5b5b5b;letter-spacing:0.8px;transform:scaleX(1.129);">Main Warehouse</span>
<div class="a" style="left:8px;top:408.6px;width:1520px;height:60px;background:#ffffff"></div>
<div class="a" style="left:0.4px;top:408.6px;width:7.8px;height:60px;background:#f1bd58"></div>
<div class="a cb" style="left:28.3px;top:427.1px"></div>
<span class="t" style="left:87.7px;top:429.8px;font-size:16px;line-height:20px;color:#36485d;-webkit-text-stroke:0.3px #36485d;letter-spacing:0.8px;transform:scaleX(1.026);">821974</span>
<span class="t" style="left:231.8px;top:429.8px;font-size:16px;line-height:20px;color:#5b5b5b;-webkit-text-stroke:0.15px #5b5b5b;letter-spacing:0.8px;transform:scaleX(1.133);">Customer One</span>
<span class="t" style="left:380.0px;top:429.8px;font-size:16px;line-height:20px;color:#5b5b5b;-webkit-text-stroke:0.15px #5b5b5b;letter-spacing:0.8px;transform:scaleX(1.091);">Aug 16th 2023</span>
<span class="t" style="left:528.2px;top:429.8px;font-size:16px;line-height:20px;color:#5b5b5b;-webkit-text-stroke:0.15px #5b5b5b;letter-spacing:0.8px;transform:scaleX(1.077);">BATCHED</span>
<span class="t" style="left:660.5px;top:429.8px;font-size:16px;line-height:20px;color:#5b5b5b;-webkit-text-stroke:0.15px #5b5b5b;letter-spacing:0.8px;transform:scaleX(1.043);">UNPROCESSED</span>
<div class="a act" style="left:882.8px;top:421.20000000000005px"></div>
<div class="a dot" style="left:897.3px;top:431.1px"></div><div class="a dot" style="left:897.3px;top:435.6px"></div><div class="a dot" style="left:897.3px;top:440.3px"></div>
<span class="t" style="left:1227.3px;top:429.8px;font-size:16px;line-height:20px;color:#5b5b5b;-webkit-text-stroke:0.15px #5b5b5b;letter-spacing:0.8px;transform:scaleX(1.129);">Main Warehouse</span>
<div class="a" style="left:8px;top:468.6px;width:1520px;height:60px;background:#f7f8fa"></div>
<div class="a" style="left:0.4px;top:468.6px;width:7.8px;height:60px;background:#244f78"></div>
<div class="a cb" style="left:28.3px;top:487.1px"></div>
<span class="t" style="left:87.7px;top:489.8px;font-size:16px;line-height:20px;color:#36485d;-webkit-text-stroke:0.3px #36485d;letter-spacing:0.8px;transform:scaleX(1.068);">843106</span>
<span class="t" style="left:231.8px;top:489.8px;font-size:16px;line-height:20px;color:#5b5b5b;-webkit-text-stroke:0.15px #5b5b5b;letter-spacing:0.8px;transform:scaleX(1.136);">Customer Two</span>
<span class="t" style="left:380.0px;top:489.8px;font-size:16px;line-height:20px;color:#5b5b5b;-webkit-text-stroke:0.15px #5b5b5b;letter-spacing:0.8px;transform:scaleX(1.112);">Aug 2nd 2023</span>
<span class="t" style="left:528.2px;top:489.8px;font-size:16px;line-height:20px;color:#5b5b5b;-webkit-text-stroke:0.15px #5b5b5b;letter-spacing:0.8px;transform:scaleX(1.057);">COMPLETED</span>
<span class="t" style="left:660.5px;top:489.8px;font-size:16px;line-height:20px;color:#5b5b5b;-webkit-text-stroke:0.15px #5b5b5b;letter-spacing:0.8px;transform:scaleX(1.043);">UNPROCESSED</span>
<div class="a act" style="left:882.8px;top:481.20000000000005px"></div>
<div class="a dot" style="left:897.3px;top:491.1px"></div><div class="a dot" style="left:897.3px;top:495.6px"></div><div class="a dot" style="left:897.3px;top:500.3px"></div>
<span class="t" style="left:1227.3px;top:489.8px;font-size:16px;line-height:20px;color:#5b5b5b;-webkit-text-stroke:0.15px #5b5b5b;letter-spacing:0.8px;transform:scaleX(1.129);">Main Warehouse</span>
<div class="a" style="left:8px;top:528.6px;width:1520px;height:60px;background:#ffffff"></div>
<div class="a" style="left:0.4px;top:528.6px;width:7.8px;height:60px;background:#f1bd58"></div>
<div class="a cb" style="left:28.3px;top:547.1px"></div>
<span class="t" style="left:87.7px;top:549.8px;font-size:16px;line-height:20px;color:#36485d;-webkit-text-stroke:0.3px #36485d;letter-spacing:0.8px;transform:scaleX(1.018);">697137</span>
<span class="t" style="left:231.8px;top:549.8px;font-size:16px;line-height:20px;color:#5b5b5b;-webkit-text-stroke:0.15px #5b5b5b;letter-spacing:0.8px;transform:scaleX(1.133);">Customer One</span>
<span class="t" style="left:380.0px;top:549.8px;font-size:16px;line-height:20px;color:#5b5b5b;-webkit-text-stroke:0.15px #5b5b5b;letter-spacing:0.8px;transform:scaleX(1.121);">Aug 29th 2023</span>
<span class="t" style="left:528.2px;top:549.8px;font-size:16px;line-height:20px;color:#5b5b5b;-webkit-text-stroke:0.15px #5b5b5b;letter-spacing:0.8px;transform:scaleX(1.057);">COMPLETED</span>
<span class="t" style="left:660.5px;top:549.8px;font-size:16px;line-height:20px;color:#5b5b5b;-webkit-text-stroke:0.15px #5b5b5b;letter-spacing:0.8px;transform:scaleX(1.051);">PACKING_COMPLETED</span>
<div class="a act" style="left:882.8px;top:541.2px"></div>
<div class="a dot" style="left:897.3px;top:551.1px"></div><div class="a dot" style="left:897.3px;top:555.6px"></div><div class="a dot" style="left:897.3px;top:560.3000000000001px"></div>
<span class="t" style="left:1227.3px;top:549.8px;font-size:16px;line-height:20px;color:#5b5b5b;-webkit-text-stroke:0.15px #5b5b5b;letter-spacing:0.8px;transform:scaleX(1.129);">Main Warehouse</span>
<div class="a" style="left:8px;top:588.6px;width:1520px;height:60px;background:#f7f8fa"></div>
<div class="a" style="left:0.4px;top:588.6px;width:7.8px;height:60px;background:#244f78"></div>
<div class="a cb" style="left:28.3px;top:607.1px"></div>
<span class="t" style="left:87.7px;top:609.8px;font-size:16px;line-height:20px;color:#36485d;-webkit-text-stroke:0.3px #36485d;letter-spacing:0.8px;transform:scaleX(1.052);">413447</span>
<span class="t" style="left:231.8px;top:609.8px;font-size:16px;line-height:20px;color:#5b5b5b;-webkit-text-stroke:0.15px #5b5b5b;letter-spacing:0.8px;transform:scaleX(1.136);">Customer Two</span>
<span class="t" style="left:380.0px;top:609.8px;font-size:16px;line-height:20px;color:#5b5b5b;-webkit-text-stroke:0.15px #5b5b5b;letter-spacing:0.8px;transform:scaleX(1.095);">Sep 26th 2023</span>
<span class="t" style="left:528.2px;top:609.8px;font-size:16px;line-height:20px;color:#5b5b5b;-webkit-text-stroke:0.15px #5b5b5b;letter-spacing:0.8px;transform:scaleX(1.036);">IN-PROCESS</span>
<span class="t" style="left:660.5px;top:609.8px;font-size:16px;line-height:20px;color:#5b5b5b;-webkit-text-stroke:0.15px #5b5b5b;letter-spacing:0.8px;transform:scaleX(1.046);">PICKING_COMPLETED</span>
<div class="a act" style="left:882.8px;top:601.2px"></div>
<div class="a dot" style="left:897.3px;top:611.1px"></div><div class="a dot" style="left:897.3px;top:615.6px"></div><div class="a dot" style="left:897.3px;top:620.3000000000001px"></div>
<span class="t" style="left:964.6px;top:609.8px;font-size:16px;line-height:20px;color:#5b5b5b;-webkit-text-stroke:0.15px #5b5b5b;letter-spacing:0.63px;transform:scaleX(1.06);">PIC-12345676</span>
<span class="t" style="left:1227.3px;top:609.8px;font-size:16px;line-height:20px;color:#5b5b5b;-webkit-text-stroke:0.15px #5b5b5b;letter-spacing:0.8px;transform:scaleX(1.129);">Main Warehouse</span>
<div class="a" style="left:4.2px;top:0.1px;width:1523.1px;height:47.7px;background:#244e75"></div>
<div class="a" style="left:29px;top:12.7px;width:23.5px;height:23.5px;border-radius:5px;background:#fff"></div>
<span class="t" style="left:87.7px;top:14.9px;font-size:16px;line-height:20px;color:#d9e2ee;-webkit-text-stroke:0.25px #d9e2ee;letter-spacing:0.8px;transform:scaleX(1.141);">Order ID</span>
<span class="t" style="left:231.8px;top:14.9px;font-size:16px;line-height:20px;color:#d9e2ee;-webkit-text-stroke:0.25px #d9e2ee;letter-spacing:0.8px;transform:scaleX(1.174);">Client</span>
<span class="t" style="left:380.0px;top:14.9px;font-size:16px;line-height:20px;color:#d9e2ee;-webkit-text-stroke:0.25px #d9e2ee;letter-spacing:0.8px;transform:scaleX(1.133);">Order Date</span>
<svg class="a" style="left:478.80000000000007px;top:13.300000000000011px" width="24" height="24" viewBox="0 0 24 24" fill="none" stroke="#d9e2ee" stroke-width="1.3" stroke-linecap="round" stroke-linejoin="round" ><path d="M4.7 7.7L12 16.3l7.3-8.6"/></svg>
<span class="t" style="left:528.0px;top:14.9px;font-size:16px;line-height:20px;color:#d9e2ee;-webkit-text-stroke:0.25px #d9e2ee;letter-spacing:0.8px;transform:scaleX(1.145);">Status</span>
<svg class="a" style="left:585.5px;top:12.399999999999977px" width="24" height="24" viewBox="0 0 24 24" fill="none" stroke="#d9e2ee" stroke-width="1.3" stroke-linecap="round" stroke-linejoin="round" ><path d="M4.7 16.3L12 7.7l7.3 8.6"/></svg>
<span class="t" style="left:660.6px;top:14.9px;font-size:16px;line-height:20px;color:#d9e2ee;-webkit-text-stroke:0.25px #d9e2ee;letter-spacing:0.8px;transform:scaleX(1.119);">Sub-Status</span>
<svg class="a" style="left:758.2px;top:12.399999999999977px" width="24" height="24" viewBox="0 0 24 24" fill="none" stroke="#d9e2ee" stroke-width="1.3" stroke-linecap="round" stroke-linejoin="round" ><path d="M4.7 16.3L12 7.7l7.3 8.6"/></svg>
<span class="t" style="left:882.2px;top:14.9px;font-size:16px;line-height:20px;color:#d9e2ee;-webkit-text-stroke:0.25px #d9e2ee;letter-spacing:0.8px;transform:scaleX(1.176);">Action</span>
<span class="t" style="left:964.0px;top:14.9px;font-size:16px;line-height:20px;color:#d9e2ee;-webkit-text-stroke:0.25px #d9e2ee;letter-spacing:0.8px;transform:scaleX(1.152);">Tote</span>
<svg class="a" style="left:1002.6000000000001px;top:12.399999999999977px" width="24" height="24" viewBox="0 0 24 24" fill="none" stroke="#d9e2ee" stroke-width="1.3" stroke-linecap="round" stroke-linejoin="round" ><path d="M4.7 16.3L12 7.7l7.3 8.6"/></svg>
<span class="t" style="left:1100.2px;top:14.9px;font-size:16px;line-height:20px;color:#d9e2ee;-webkit-text-stroke:0.25px #d9e2ee;letter-spacing:0.8px;transform:scaleX(1.129);">Sub-Tote</span>
<svg class="a" style="left:1179.8000000000002px;top:12.399999999999977px" width="24" height="24" viewBox="0 0 24 24" fill="none" stroke="#d9e2ee" stroke-width="1.3" stroke-linecap="round" stroke-linejoin="round" ><path d="M4.7 16.3L12 7.7l7.3 8.6"/></svg>
<span class="t" style="left:1227.3px;top:14.9px;font-size:16px;line-height:20px;color:#d9e2ee;-webkit-text-stroke:0.25px #d9e2ee;letter-spacing:0.8px;transform:scaleX(1.131);">Warehouse</span>
<span class="t" style="left:1395.5px;top:14.9px;font-size:16px;line-height:20px;color:#d9e2ee;-webkit-text-stroke:0.25px #d9e2ee;letter-spacing:0.8px;transform:scaleX(1.148);">Pro Number</span>
<svg class="a" style="left:1503.8px;top:12.399999999999977px" width="24" height="24" viewBox="0 0 24 24" fill="none" stroke="#d9e2ee" stroke-width="1.3" stroke-linecap="round" stroke-linejoin="round" ><path d="M4.7 16.3L12 7.7l7.3 8.6"/></svg>
<div class="a" style="left:1531.5px;top:4px;width:7.5px;height:350px;border-radius:4px;background:#244f78"></div>
</div>
<span class="t" style="left:307.0px;top:1037.9px;font-size:16px;line-height:20px;color:#333;-webkit-text-stroke:0.2px #333;transform:scaleX(1.109);">Showing 1 to 25 of 390 results</span>
<span class="t" style="left:1471.5px;top:1038.2px;font-size:16px;line-height:20px;color:#4b5563;transform:scaleX(1.114);">Results per page</span>
<div class="a box" style="left:1624px;top:1029px;width:70px;height:40px"></div>
<span class="t" style="left:1638.8px;top:1037.9px;font-size:14px;line-height:18px;color:#222;transform:scaleX(1.104);">25</span>
<svg class="a" style="left:1665.5px;top:1039.5px" width="15" height="15" viewBox="0 0 24 24" fill="none" stroke="#222" stroke-width="3" stroke-linecap="round" stroke-linejoin="round" ><path d="M19 9l-7 7-7-7"/></svg>
<div class="a box" style="left:1713px;top:1029px;width:166px;height:40px"></div>
<div class="a" style="left:1808px;top:1029px;width:1px;height:40px;background:#ececec"></div>
<svg class="a" style="left:1721.5px;top:1039px" width="16" height="16" viewBox="0 0 24 24" fill="none" stroke="#dcdcdc" stroke-width="2" stroke-linecap="round" stroke-linejoin="round" ><path d="M15 19l-7-7 7-7"/></svg>
<span class="t" style="left:1740.0px;top:1037.9px;font-size:14px;line-height:18px;color:#dedede;transform:scaleX(1.124);">Previous</span>
<span class="t" style="left:1817.4px;top:1037.9px;font-size:14px;line-height:18px;color:#333;transform:scaleX(1.174);">Next</span>
<svg class="a" style="left:1853.5px;top:1038.5px" width="17" height="17" viewBox="0 0 24 24" fill="none" stroke="#333" stroke-width="2" stroke-linecap="round" stroke-linejoin="round" ><path d="M9 5l7 7-7 7"/></svg>
</body></html>
